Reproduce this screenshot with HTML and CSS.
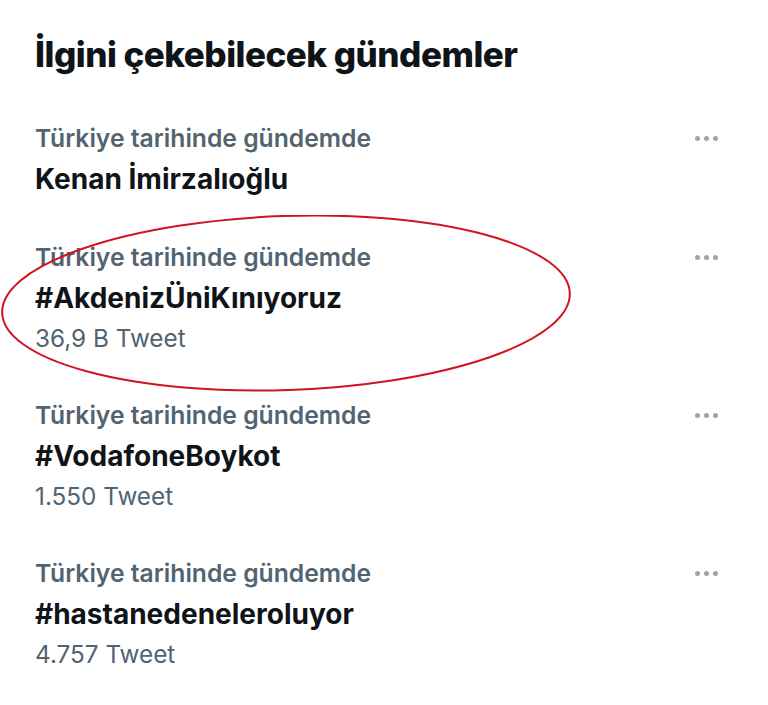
FILE: index.html
```html
<!DOCTYPE html>
<html lang="tr">
<head>
    <meta charset="UTF-8">
    <meta name="viewport" content="width=device-width, initial-scale=1.0">
    <title>İlgini çekebilecek gündemler</title>
    <link rel="stylesheet" href="styles.css">
</head>
<body>
    <div class="panel">
        <h2 class="panel-title">İlgini çekebilecek gündemler</h2>

        <div class="trend">
            <div class="trend-text">
                <div class="trend-meta">Türkiye tarihinde gündemde</div>
                <div class="trend-name">Kenan İmirzalıoğlu</div>
            </div>
            <div class="trend-more"><span></span><span></span><span></span></div>
        </div>

        <div class="trend">
            <div class="trend-text">
                <div class="trend-meta">Türkiye tarihinde gündemde</div>
                <div class="trend-name">#AkdenizÜniKınıyoruz</div>
                <div class="trend-count">36,9 B Tweet</div>
            </div>
            <div class="trend-more"><span></span><span></span><span></span></div>
        </div>

        <div class="trend">
            <div class="trend-text">
                <div class="trend-meta">Türkiye tarihinde gündemde</div>
                <div class="trend-name">#VodafoneBoykot</div>
                <div class="trend-count">1.550 Tweet</div>
            </div>
            <div class="trend-more"><span></span><span></span><span></span></div>
        </div>

        <div class="trend">
            <div class="trend-text">
                <div class="trend-meta">Türkiye tarihinde gündemde</div>
                <div class="trend-name">#hastanedeneleroluyor</div>
                <div class="trend-count">4.757 Tweet</div>
            </div>
            <div class="trend-more"><span></span><span></span><span></span></div>
        </div>

        <!-- red circle drawn over the second trend -->
        <svg class="circle-mark" width="580" height="185" viewBox="0 0 580 185">
            <ellipse cx="286" cy="88" rx="284" ry="87" transform="rotate(-2 286 88)" fill="none" stroke="#d0141f" stroke-width="2"/>
        </svg>
    </div>
</body>
</html>
```

FILE: styles.css
```css
body {
    margin: 0;
    padding: 0;
    background-color: #fff;
    font-family: Inter, "Noto Sans", Arial, sans-serif;
    color: #0f1419;
}
.panel {
    position: relative;
    padding: 30px 50px 0 35px;
}
.panel-title {
    margin: 0 0 40px 0;
    font-size: 35px;
    font-weight: 800;
    line-height: 48px;
    letter-spacing: -0.5px;
}
.trend {
    display: flex;
    justify-content: space-between;
    align-items: flex-start;
    padding: 0 0 37px 0;
}
.trend-meta {
    font-size: 24.7px;
    font-weight: 600;
    line-height: 41px;
    color: #536471;
}
.trend-name {
    font-size: 28px;
    font-weight: 700;
    line-height: 41px;
    color: #0f1419;
}
.trend-count {
    font-size: 24.3px;
    font-weight: 400;
    line-height: 39px;
    color: #536471;
}
.trend-more {
    display: flex;
    gap: 4px;
    padding-top: 18px;
}
.trend-more span {
    width: 5px;
    height: 5px;
    border-radius: 50%;
    background-color: #9aa5b0;
}
.circle-mark {
    position: absolute;
    left: 0;
    top: 215px;
}
```
